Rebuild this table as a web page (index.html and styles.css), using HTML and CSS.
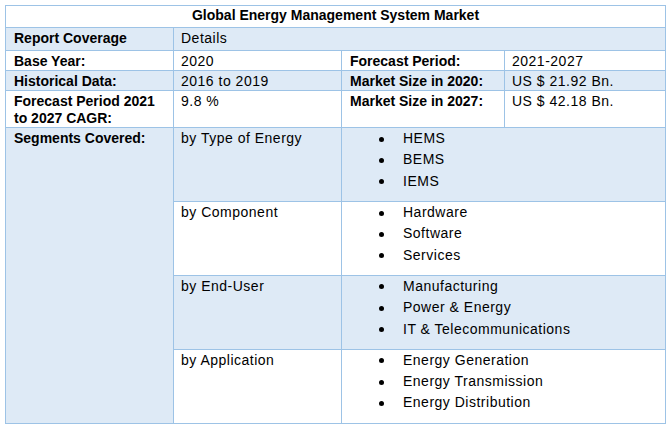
FILE: index.html
```html
<!DOCTYPE html>
<html lang="en">
<head>
<meta charset="utf-8">
<title>Global Energy Management System Market</title>
<link rel="stylesheet" href="styles.css">
</head>
<body>
<div class="page">
  <table class="market">
    <colgroup>
      <col class="c1"><col class="c2"><col class="c3"><col class="c4">
    </colgroup>
    <tr class="title-row"><th colspan="4" class="title">Global Energy Management System Market</th></tr>
    <tr class="shade head-row"><td class="lbl">Report Coverage</td><td colspan="3" class="val">Details</td></tr>
    <tr><td class="lbl">Base Year:</td><td class="val">2020</td><td class="lbl">Forecast Period:</td><td class="val">2021-2027</td></tr>
    <tr class="shade"><td class="lbl">Historical Data:</td><td class="val">2016 to 2019</td><td class="lbl">Market Size in 2020:</td><td class="val">US $ 21.92 Bn.</td></tr>
    <tr><td class="lbl">Forecast Period 2021 to 2027 CAGR:</td><td class="val">9.8 %</td><td class="lbl">Market Size in 2027:</td><td class="val">US $ 42.18 Bn.</td></tr>
    <tr class="shade">
      <td class="lbl segs" rowspan="4">Segments Covered:</td>
      <td class="val">by Type of Energy</td>
      <td colspan="2" class="list"><ul><li>HEMS</li><li>BEMS</li><li>IEMS</li></ul></td>
    </tr>
    <tr>
      <td class="val">by Component</td>
      <td colspan="2" class="list"><ul><li>Hardware</li><li>Software</li><li>Services</li></ul></td>
    </tr>
    <tr class="shade">
      <td class="val">by End-User</td>
      <td colspan="2" class="list"><ul><li>Manufacturing</li><li>Power &amp; Energy</li><li>IT &amp; Telecommunications</li></ul></td>
    </tr>
    <tr>
      <td class="val">by Application</td>
      <td colspan="2" class="list"><ul><li>Energy Generation</li><li>Energy Transmission</li><li>Energy Distribution</li></ul></td>
    </tr>
  </table>
</div>
</body>
</html>
```

FILE: styles.css
```css
html, body {
  margin: 0;
  padding: 0;
  background: #ffffff;
}

.page {
  padding: 5px 0 0 5px;
}

.market {
  border-collapse: collapse;
  table-layout: fixed;
  width: 660px;
  font-family: "Liberation Sans", Arial, sans-serif;
  font-size: 14px;
  line-height: 17px;
  color: #000000;
}

.c1 { width: 168px; }
.c2 { width: 168px; }
.c3 { width: 163px; }
.c4 { width: 161px; }

.market th,
.market td {
  border: 1px solid #9dc3e6;
  vertical-align: top;
  text-align: left;
  padding: 2px 7px 0 8px;
}

.market .title {
  text-align: center;
  font-weight: 700;
  padding: 1px 7px 3px;
}

.shade td,
.market .segs {
  background: #deeaf6;
}

.lbl {
  font-weight: 700;
}

.market .val {
  letter-spacing: 0.5px;
  padding-left: 7px;
}

.head-row td {
  padding-bottom: 3px;
}

.market .list {
  padding: 0 7px 9px 8px;
  letter-spacing: 0.5px;
}

.list ul {
  list-style: none;
  margin: 0;
  padding: 0;
}

.list li {
  display: flex;
  align-items: center;
  height: 21.3px;
  padding-left: 29px;
}

.list li::before {
  content: "";
  flex: none;
  width: 5px;
  height: 5px;
  border-radius: 50%;
  background: #000000;
  margin-right: 19px;
  margin-top: 1px;
}
```
